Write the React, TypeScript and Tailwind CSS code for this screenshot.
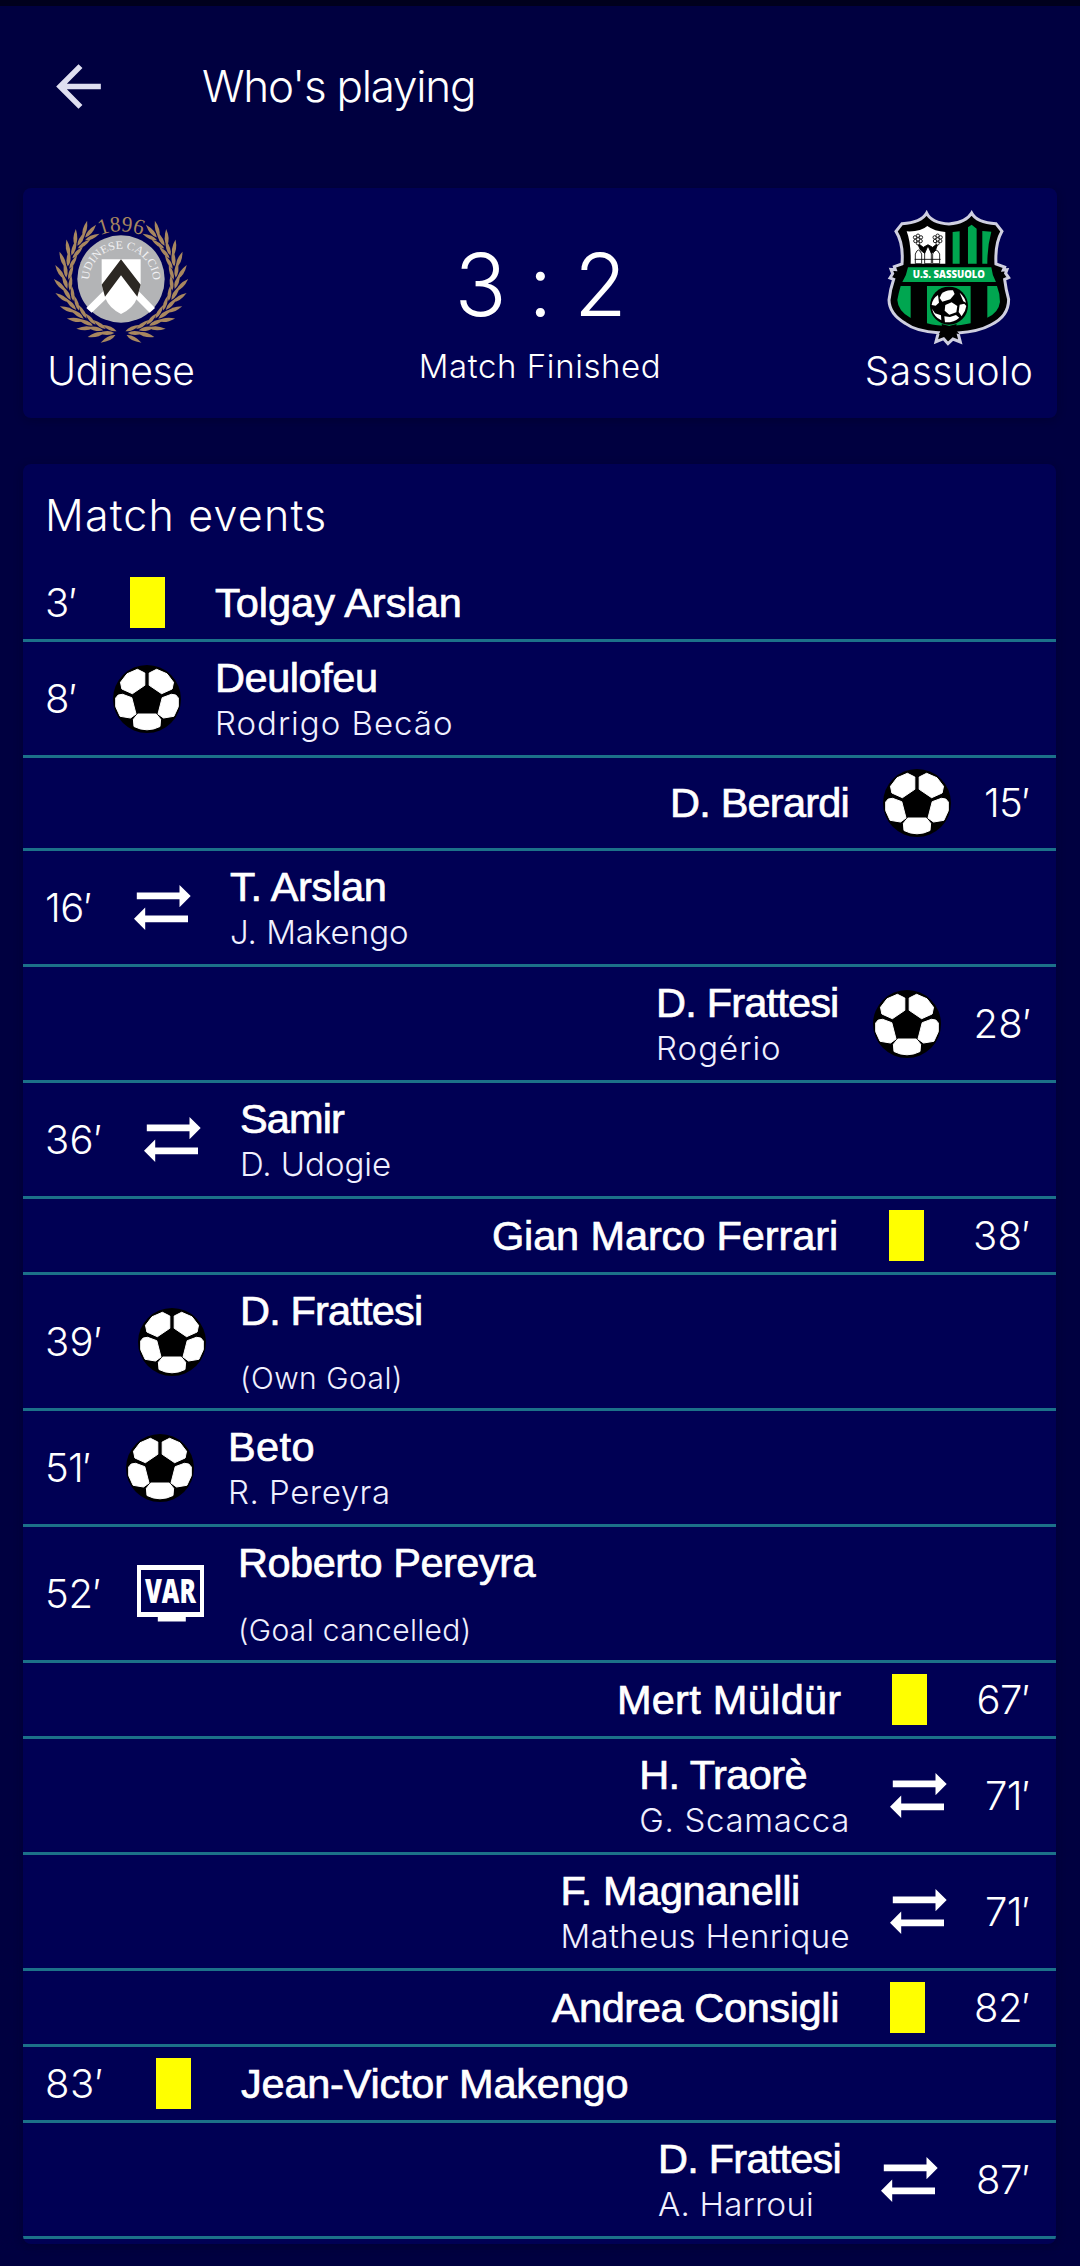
import React, { useLayoutEffect, useRef, useState } from "react";

/* One line of text whose letter spacing is adjusted so its ink spans `width` pixels. */
function Fit({ width, className, children }: { width: number; className: string; children: string }) {
  const ref = useRef<HTMLSpanElement>(null);
  const [spacing, setSpacing] = useState(0);
  useLayoutEffect(() => {
    const cs = getComputedStyle(ref.current!);
    const ctx = document.createElement("canvas").getContext("2d")!;
    ctx.font = `${cs.fontWeight} ${cs.fontSize} ${cs.fontFamily}`;
    const m = ctx.measureText(children);
    const ink = m.actualBoundingBoxRight + m.actualBoundingBoxLeft;
    setSpacing((width - ink) / (children.length - 1));
  }, [width, children]);
  return (
    <span ref={ref} className={`block whitespace-nowrap ${className}`} style={{ letterSpacing: `${spacing}px` }}>
      {children}
    </span>
  );
}

const light = "font-['Inter','Liberation_Sans',sans-serif] font-light";
const strong = "font-['Liberation_Sans',Arial,sans-serif] font-normal [-webkit-text-stroke:0.7px_white]";

const HALF_BALL = [
  "-9.6,-29.7 -2.2,-26 -2.2,-13.7 -14.6,-5.3 -25.1,-10 -26.5,-16.7 -20,-25.2",
  "-28.8,-4 -24.4,-4.7 -15.2,-1.3 -11,15 -16.5,19 -26.9,17.3 -31.3,7.7 -31.3,-1",
];

function Ball() {
  return (
    <svg className="size-[68px]" viewBox="-34 -34 68 68">
      <circle r="34" fill="#000" />
      <g fill="#fff" stroke="#fff" strokeWidth="1" strokeLinejoin="round">
        {HALF_BALL.map((p) => (
          <React.Fragment key={p}>
            <polygon points={p} />
            <polygon points={p} transform="scale(-1 1)" />
          </React.Fragment>
        ))}
        <path d="M-9.3 15H9.3L13.6 20.3L13 27.5Q7 30.7 0 30.8Q-7 30.7 -13 27.5L-13.6 20.3Z" />
      </g>
    </svg>
  );
}

function Swap() {
  return (
    <svg className="h-[45px] w-[57px]" viewBox="0 0 57 45" fill="#fff">
      <path d="M2.8 7.6H45.5V0L56.7 11.1L45.5 22.2V14.2H2.8Z" />
      <path d="M54 30.4H11.2V22.6L0 33.8L11.2 45V37.2H54Z" />
    </svg>
  );
}

function Var() {
  return (
    <svg className="h-[57px] w-[67px] overflow-visible" viewBox="0 0 67 57">
      <path d="M0 0H67V52H48.8V56.6H20.8V52H0ZM4 5V47H63V5Z" fill="#fff" fillRule="evenodd" />
      <text
        x="8"
        y="38.4"
        textLength="51"
        lengthAdjust="spacingAndGlyphs"
        fill="#fff"
        fontFamily="Open Sans, sans-serif"
        fontWeight="800"
        fontSize="34"
      >
        VAR
      </text>
    </svg>
  );
}

const Card = () => <div className="h-[51px] w-[35px] bg-[#ffff00]" />;

type Kind = "card" | "goal" | "sub" | "var";
type Ev = {
  side: "l" | "r";
  time: string;
  tw: number;
  kind: Kind;
  name: string;
  nw: number;
  sub?: string;
  sw?: number;
  note?: boolean;
};

const EVENTS: Ev[] = [
  { side: "l", time: "3′", tw: 33, kind: "card", name: "Tolgay Arslan", nw: 247 },
  { side: "l", time: "8′", tw: 33, kind: "goal", name: "Deulofeu", nw: 158, sub: "Rodrigo Becão", sw: 233 },
  { side: "r", time: "15′", tw: 47, kind: "goal", name: "D. Berardi", nw: 174.6 },
  { side: "l", time: "16′", tw: 48, kind: "sub", name: "T. Arslan", nw: 157, sub: "J. Makengo", sw: 176 },
  { side: "r", time: "28′", tw: 57.5, kind: "goal", name: "D. Frattesi", nw: 178, sub: "Rogério", sw: 120 },
  { side: "l", time: "36′", tw: 58, kind: "sub", name: "Samir", nw: 104, sub: "D. Udogie", sw: 147 },
  { side: "r", time: "38′", tw: 58, kind: "card", name: "Gian Marco Ferrari", nw: 342 },
  { side: "l", time: "39′", tw: 58, kind: "goal", name: "D. Frattesi", nw: 178, sub: "(Own Goal)", sw: 157, note: true },
  { side: "l", time: "51′", tw: 46, kind: "goal", name: "Beto", nw: 82.4, sub: "R. Pereyra", sw: 157 },
  { side: "l", time: "52′", tw: 56, kind: "var", name: "Roberto Pereyra", nw: 295.5, sub: "(Goal cancelled)", sw: 227.7, note: true },
  { side: "r", time: "67′", tw: 54.5, kind: "card", name: "Mert Müldür", nw: 221.5 },
  { side: "r", time: "71′", tw: 46, kind: "sub", name: "H. Traorè", nw: 165, sub: "G. Scamacca", sw: 206 },
  { side: "r", time: "71′", tw: 46, kind: "sub", name: "F. Magnanelli", nw: 234.5, sub: "Matheus Henrique", sw: 285 },
  { side: "r", time: "82′", tw: 57, kind: "card", name: "Andrea Consigli", nw: 285.5 },
  { side: "l", time: "83′", tw: 59, kind: "card", name: "Jean-Victor Makengo", nw: 386.4 },
  { side: "r", time: "87′", tw: 55, kind: "sub", name: "D. Frattesi", nw: 178.5, sub: "A. Harroui", sw: 154 },
];

const ICONS = { card: Card, goal: Ball, sub: Swap, var: Var };

function rowHeight(e: Ev) {
  if (e.note) return "h-[136px]";
  if (e.sub) return "h-[116px]";
  return e.kind === "goal" ? "h-[93px]" : "h-[76px]";
}

function Row({ e }: { e: Ev }) {
  const Icon = ICONS[e.kind];
  return (
    <li
      className={`flex items-center border-b-3 border-[#1c7189] pl-[23px] pr-[24px] ${rowHeight(e)} ${
        e.side === "r" ? "flex-row-reverse" : ""
      }`}
    >
      <div className="shrink-0" style={{ width: e.tw }}>
        <Fit width={e.tw - 4} className={`${light} -ml-px text-[40px] leading-[48px]`}>
          {e.time}
        </Fit>
      </div>
      <div className="mx-[34px] flex w-[68px] shrink-0 justify-center">
        <Icon />
      </div>
      <div>
        <Fit width={e.nw} className={`${strong} text-[41.5px] leading-[48px]`}>
          {e.name}
        </Fit>
        {e.sub && (
          <Fit
            width={e.sw!}
            className={`${light} text-[#f0f0ff] ${e.note ? "mt-[25px] text-[30px] leading-[36px]" : "text-[33px] leading-[42px]"}`}
          >
            {e.sub}
          </Fit>
        )}
      </div>
    </li>
  );
}

/* Laurel: leaf clusters placed along each side of the ring, from the bottom up. */
const LEAVES = Array.from({ length: 12 }, (_, i) => 7 + i * 12);

function UdineseCrest() {
  return (
    <svg className="h-[140px] w-[140px]" viewBox="66 57 420 420">
      <defs>
        <path id="year" d="M196 145A160 160 0 0 1 356 145" />
        <path id="club" d="M180 272A96 96 0 0 1 372 272" />
      </defs>
      <g fill="#a8875f">
        {[1, -1].map((s) => (
          <g key={s} transform={`translate(276 266) scale(${s} 1)`}>
            {LEAVES.map((a) => (
              <g key={a} transform={`rotate(${-a}) translate(-6 166)`}>
                <path d="M0 0Q18 -12 50 0Q18 12 0 0Z" transform="translate(2 4) rotate(34)" />
                <path d="M0 0Q18 -13 50 0Q18 11 0 0Z" transform="translate(6 -2) rotate(8)" />
                <path d="M0 0Q18 -11 48 0Q18 11 0 0Z" transform="translate(0 -8) rotate(-17)" />
              </g>
            ))}
          </g>
        ))}
      </g>
      <circle cx="276" cy="267" r="131" fill="#b3b4b6" />
      <path d="M226 300L172 354L188 368L234 324ZM326 300L378 354L362 368L318 324Z" fill="#fff" />
      <path d="M218 208H335V285L324 325Q312 356 276 372Q242 356 229 325L218 285Z" fill="#fff" />
      <path d="M276 208L335 284L325 320L276 256L228 320L218 284Z" fill="#2c2823" />
      <text fill="#a8875f" fontFamily="Liberation Serif, serif" fontSize="66">
        <textPath href="#year" startOffset="20" textLength="128" lengthAdjust="spacingAndGlyphs">
          1896
        </textPath>
      </text>
      <text fill="#f1f1f3" fontFamily="Liberation Serif, serif" fontSize="34">
        <textPath href="#club" startOffset="2" textLength="298" lengthAdjust="spacingAndGlyphs">
          UDINESE CALCIO
        </textPath>
      </text>
    </svg>
  );
}

function SassuoloCrest() {
  return (
    <svg className="h-[136.7px] w-[125.3px]" viewBox="110 60 376 410">
      <path
        d="M232 69Q246 98 299 102Q350 98 367 69Q382 98 440 101L458 124Q437 160 440 222L466 231L462 240L473 239L469 250L478 263L466 268Q470 300 478 328Q478 380 424 405Q390 424 326 429L333 456L311 447L296 461L283 446L260 455L267 428Q200 424 168 400Q120 372 119 330Q122 300 133 268L122 264L130 251L125 238L138 239L135 230L158 222Q163 160 140 124L158 101Q216 98 232 69Z"
        fill="#000"
        stroke="#cfcfe0"
        strokeWidth="9"
      />
      <path d="M172 124Q214 126 234 108Q256 124 288 126V221H184Q186 160 172 124Z" fill="#fff" />
      <g fill="#00a650">
        <path d="M310 126L331 124V221H310ZM356 112L367 104L382 116V221H356ZM399 123L426 125Q414 170 414 221H399Z" />
        <path d="M176 232H426Q428 254 440 276H159Q172 256 176 232Z" />
        <path d="M154 288H184V384Q146 364 144 330Q148 308 154 288ZM414 288H443Q452 310 452 336Q448 368 414 383ZM233 288H364V400Q330 408 300 408Q262 408 233 400Z" />
      </g>
      <g fill="#fff" stroke="#000" strokeWidth="2.5">
        <path d="M198 221V192Q207 168 217 192V221ZM226 221V180Q236 156 246 180V221ZM250 221V192Q260 168 271 192V221ZM196 208H274" />
        <path d="M213 180L204 158L222 172L236 164L250 172L267 158L258 182L246 190L236 168L226 190Z" fill="#000" />
        {[206, 265].map((cx) => (
          <g key={cx}>
            <circle cx={cx - 9} cy="142" r="5" />
            <circle cx={cx} cy="137" r="5" />
            <circle cx={cx + 9} cy="142" r="5" />
            <circle cx={cx - 8} cy="153" r="5" />
            <circle cx={cx + 8} cy="153" r="5" />
            <circle cx={cx} cy="148" r="5" />
            <circle cx={cx} cy="160" r="5" />
          </g>
        ))}
      </g>
      <text x="190" y="265" textLength="217" lengthAdjust="spacingAndGlyphs" fill="#fff" fontFamily="Open Sans, sans-serif" fontWeight="800" fontSize="32">
        U.S. SASSUOLO
      </text>
      <circle cx="299" cy="347" r="57" fill="#000" />
      <g fill="#fff">
        <path d="M277 311Q290 298 311 301L316 312L303 328L279 335L271 324Z" />
        <path d="M266 315L269 338L259 347L247 345Q249 326 266 315Z" />
        <path d="M331 308Q347 322 350 338L342 334Z" />
        <path d="M288 345L307 337L324 348L321 367L300 374L286 362Z" />
        <path d="M331 344L345 341L351 348Q349 364 337 379L328 366Z" />
        <path d="M248 356L257 370L275 376L276 391Q254 381 248 356Z" />
        <path d="M285 379L302 381L320 375L330 383Q314 398 287 397Z" />
      </g>
      <path d="M277 402L300 408L322 402L318 418L330 432L310 430L297 448L285 430L268 432L280 418Z" fill="#000" />
    </svg>
  );
}

export default function App() {
  return (
    <div className="flex h-[2266px] w-[1080px] flex-col overflow-hidden bg-[#000040] text-white">
      <div className="h-[6px] shrink-0 bg-[#00001c]" />
      <header className="flex h-[182px] shrink-0 items-start pl-[45px] pt-[47px]">
        <svg className="size-[67px]" viewBox="0 0 24 24" fill="#dfdff0">
          <path d="M20 11H7.83l5.59-5.59L12 4l-8 8 8 8 1.41-1.41L7.83 13H20v-2z" />
        </svg>
        <Fit width={270} className={`${light} ml-[90px] mt-[3px] text-[44px] leading-[60px]`}>
          Who's playing
        </Fit>
      </header>

      <section className="mx-[23px] flex h-[230px] shrink-0 items-start justify-between rounded-lg bg-[#000054] px-[23px] pt-[21px] shadow-[0_2px_10px_rgba(0,0,20,0.3)]">
        <div className="flex w-[150px] flex-col items-center">
          <UdineseCrest />
          <Fit width={143} className={`${light} mt-[-2px] text-[39px] leading-[48px]`}>
            Udinese
          </Fit>
        </div>
        <div className="flex flex-col items-center pl-[20px]">
          <Fit width={161.5} className={`${light} mt-[26px] text-[86px] leading-[100px]`}>
            3 : 2
          </Fit>
          <Fit width={237} className={`${light} mt-[10px] text-[33px] leading-[42px]`}>
            Match Finished
          </Fit>
        </div>
        <div className="flex w-[170px] flex-col items-center pt-px">
          <SassuoloCrest />
          <Fit width={164} className={`${light} text-[39px] leading-[48px]`}>
            Sassuolo
          </Fit>
        </div>
      </section>

      <section className="ml-[23px] mr-[24px] mt-[46px] shrink-0 overflow-hidden rounded-lg bg-[#000054] pb-[5px] shadow-[0_2px_10px_rgba(0,0,20,0.3)]">
        <h2 className="flex h-[102px] items-center pl-[22px]">
          <Fit width={275} className={`${light} text-[43px] leading-[52px]`}>
            Match events
          </Fit>
        </h2>
        <ul>
          {EVENTS.map((e, i) => (
            <Row key={i} e={e} />
          ))}
        </ul>
      </section>
    </div>
  );
}
